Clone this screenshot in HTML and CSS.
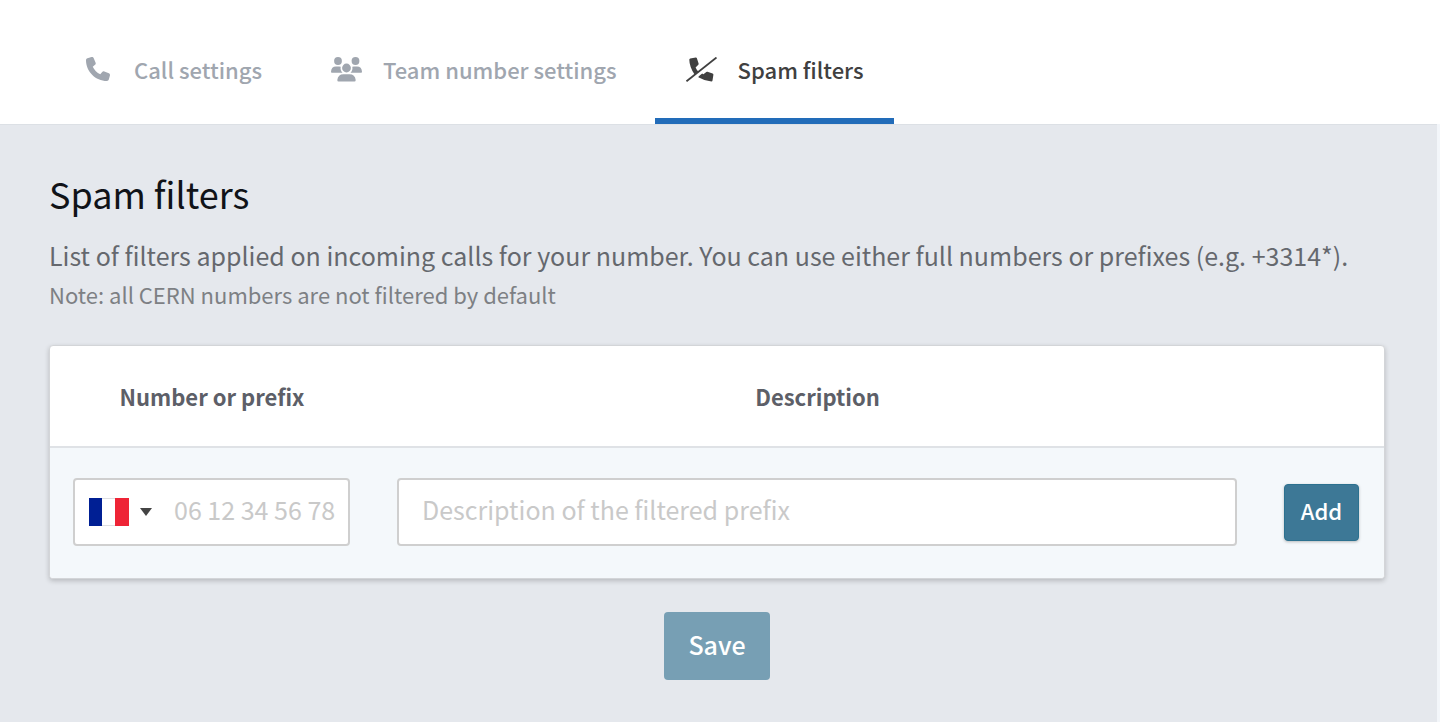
FILE: index.html
```html
<!DOCTYPE html>
<html lang="en">
<head>
<meta charset="utf-8">
<meta name="viewport" content="width=device-width, initial-scale=1">
<title>Spam filters</title>
<link rel="stylesheet" href="styles.css">
</head>
<body>
<nav class="tabs" aria-label="Settings">
  <a class="tab" href="#call">
    <svg class="tab-icon" width="27" height="24" viewBox="0 0 576 512" aria-hidden="true"><path fill="currentColor" d="M164.900 24.600c-7.700-18.600-28-28.500-47.400-23.200l-88 24C12.100 30.200 0 46 0 64C0 311.400 200.600 512 448 512c18 0 33.800-12.100 38.600-29.500l24-88c5.300-19.400-4.600-39.700-23.200-47.400l-96-40c-16.300-6.800-35.200-2.100-46.300 11.600L304.700 368C234.300 334.700 177.300 277.700 144 207.300L193.300 167c13.700-11.200 18.400-30 11.600-46.300l-40-96z"/></svg>
    <span>Call settings</span>
  </a>
  <a class="tab" href="#team">
    <svg class="tab-icon" width="31" height="25" viewBox="0 0 31 25" aria-hidden="true"><g fill="currentColor"><circle cx="7" cy="4" r="3.900"/><circle cx="24.500" cy="4" r="3.900"/><circle cx="15.500" cy="11" r="4.400"/><path d="M0.800 15.700Q0 15.700 0 14.700Q0.300 9.400 5 9.400H8Q9 9.400 9.700 9.800Q9 13.500 11.500 15.700ZM30.200 15.700Q31 15.700 31 14.700Q30.700 9.400 26 9.400H23Q22 9.400 21.300 9.800Q22 13.500 19.500 15.700ZM12.500 17.300H18.500Q24 17.300 24.700 23Q24.700 24.600 23.500 24.600H7.500Q6.300 24.600 6.300 23Q7 17.300 12.500 17.300Z"/></g></svg>
    <span>Team number settings</span>
  </a>
  <a class="tab tab-active" href="#spam" aria-current="page">
    <svg class="tab-icon" width="31" height="25" viewBox="0 0 31 25" aria-hidden="true"><path fill="currentColor" d="M4.200 1.500L9.800 0.400Q10.500 0.300 10.800 1L12.600 6.500Q12.800 7.200 12.300 7.700L9.600 10.500Q10.600 12.800 12.300 14.500L8.600 17.500Q3.400 9.800 3.300 2.700Q3.300 1.700 4.200 1.500ZM12.800 19.200L16.200 16.500Q17 17.200 17.400 17.300L20.300 14.900Q20.800 14.500 21.500 14.800L26.600 16.500Q27.500 16.800 27.400 17.700L26.500 23.500Q26.400 24.400 25.400 24.400Q18.400 23.800 12.300 20.200Z"/><path stroke="currentColor" stroke-width="1.800" d="M0.500 24.300L30.500 0.500"/></svg>
    <span>Spam filters</span>
  </a>
</nav>
<main class="content">
  <h1 class="title">Spam filters</h1>
  <p class="lead">List of filters applied on incoming calls for your number. You can use either full numbers or prefixes (e.g. +3314*).</p>
  <p class="note">Note: all CERN numbers are not filtered by default</p>
  <form class="filters">
    <div class="card">
      <table class="table">
        <colgroup><col class="col-number"><col><col class="col-action"></colgroup>
        <thead>
          <tr><th scope="col" id="number-label">Number or prefix</th><th scope="col" id="description-label">Description</th><td></td></tr>
        </thead>
        <tbody>
          <tr>
            <td>
              <div class="field phone">
                <button class="country" type="button" aria-label="Country: France">
                  <svg width="40" height="28" viewBox="0 0 40 28" aria-hidden="true"><path fill="#dedfe2" d="M0 0h40v28H0z"/><path fill="#fff" d="M13 1h14v26H13z"/><path fill="#001f94" d="M0 0h13v28H0z"/><path fill="#ee2436" d="M26 0h14v28H26z"/></svg>
                  <svg width="12" height="8" viewBox="0 0 12 8" aria-hidden="true"><path fill="#444" d="M0 0h12L6 8z"/></svg>
                </button>
                <input class="input phone-input" type="tel" placeholder="06 12 34 56 78" aria-labelledby="number-label">
              </div>
            </td>
            <td><div class="field"><input class="input" type="text" placeholder="Description of the filtered prefix" aria-labelledby="description-label"></div></td>
            <td><button class="button add" type="button">Add</button></td>
          </tr>
        </tbody>
      </table>
    </div>
    <button class="button save" type="submit" disabled>Save</button>
  </form>
</main>
</body>
</html>
```
FILE: styles.css
```css
* { box-sizing: border-box; }

body {
  margin: 0;
  min-height: 100vh;
  display: flex;
  flex-direction: column;
  background: #f3f6fa;
  font-family: "Noto Sans CJK SC", "Noto Sans", sans-serif;
}

input, button { font: inherit; }

.tabs {
  display: flex;
  gap: 8px;
  height: 124px;
  padding: 20px 55px 0;
  background: #fff;
}

.tab {
  display: flex;
  align-items: center;
  gap: 21px;
  padding: 0 30px 0 31px;
  border-bottom: 6px solid transparent;
  color: #a0a6af;
  font-size: 22px;
  font-weight: 500;
  line-height: 32px;
  text-decoration: none;
}

.tab-icon { flex: none; }

.tab-active {
  color: #404040;
  border-color: #226cb9;
}

.content {
  flex: 1;
  margin-right: 3px;
  padding: 44px 52px 42px 49px;
  background: #e5e8ed;
  border-top: 1px solid #dce0e5;
}

.title {
  margin: 0;
  color: #101318;
  font-size: 36px;
  font-weight: 400;
  line-height: 48px;
}

.lead {
  margin: 18px 0 0;
  color: #65686e;
  font-size: 25px;
  line-height: 40px;
}

.note {
  margin: 0;
  color: #7d8084;
  font-size: 22px;
  line-height: 38px;
}

.filters {
  display: flex;
  flex-direction: column;
  align-items: center;
  gap: 33px;
  margin-top: 32px;
}

.card {
  width: 100%;
  border: 1px solid #d3d5d8;
  border-radius: 4px;
  background: #fff;
  box-shadow: 0 2px 5px rgba(0, 0, 0, 0.2);
  overflow: hidden;
}

.table {
  width: 100%;
  table-layout: fixed;
  border-collapse: collapse;
}

.col-number { width: 324px; }
.col-action { width: 123px; }

.table th {
  height: 101px;
  padding: 0;
  color: #5d5f68;
  font-size: 22px;
  font-weight: 700;
  border-bottom: 2px solid #dfe2e6;
}

.table thead td { border-bottom: 2px solid #dfe2e6; }

.table tbody td {
  padding: 30px 24px 32px 23px;
  background: #f4f8fb;
}

.field {
  display: flex;
  height: 68px;
  border: 2px solid #cfcfcf;
  border-radius: 4px;
  background: #fff;
  overflow: hidden;
}

.country {
  display: flex;
  align-items: center;
  gap: 11px;
  padding: 0 0 0 14px;
  border: 0;
  background: none;
}

.input {
  flex: 1;
  min-width: 0;
  padding: 0 23px 6px;
  border: 0;
  background: none;
  color: #404040;
  font-size: 25px;
}

.input::placeholder { color: #c9c9c9; opacity: 1; }

.phone-input {
  padding-left: 22px;
  padding-right: 0;
}

.button {
  border: 0;
  border-radius: 4px;
  color: #fff;
  font-weight: 500;
}

.add {
  width: 75px;
  height: 57px;
  padding: 0 0 4px;
  background: #3d7896;
  border: 1px solid #2c718f;
  box-shadow: 0 1px 3px rgba(0, 0, 0, 0.25);
  font-size: 22px;
}

.save {
  width: 106px;
  height: 68px;
  padding: 0 0 4px;
  background: #779fb4;
  font-size: 25px;
}
```
